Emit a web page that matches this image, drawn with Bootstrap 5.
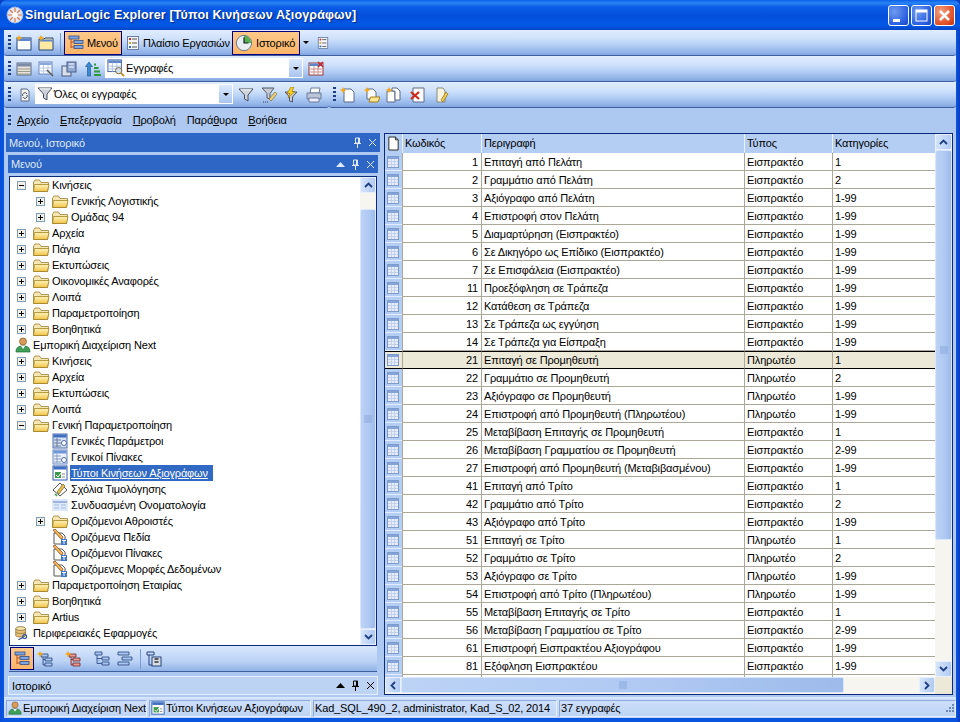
<!DOCTYPE html>
<html lang="el">
<head>
    <meta charset="UTF-8">
    <title>SingularLogic Explorer</title>
    <link href="https://cdn.jsdelivr.net/npm/bootstrap@5.3.0/dist/css/bootstrap.min.css" rel="stylesheet">
    <style>
        html, body { height: 722px; overflow: hidden; }
        body { font-family: "Liberation Sans", Arial, sans-serif; font-size: 11px; letter-spacing: -.15px; color: #000; background: #0a3fc4; line-height: 16px; }
        svg { display: block; flex: none; }
        .xp-window { width: 960px; height: 722px; background: linear-gradient(90deg, #0a4fd8 0, #0a55e0 4px, #0a55e0 956px, #0a3cc0 960px); border-radius: 7px 7px 0 0; overflow: hidden; }
        .xp-title { height: 30px; flex: none; padding: 0 5px 0 6px; background: linear-gradient(180deg, #0a5fe8 0, #2a84f4 3px, #0a5ce6 7px, #0350dc 50%, #0358e6 85%, #0345c4 100%); color: #fff; }
        .xp-title-text { font-size: 12.5px; font-weight: 700; letter-spacing: .15px; margin-left: 1px; text-shadow: 1px 1px 1px #0a2a80; white-space: nowrap; }
        .xp-capbtn { width: 21px; height: 21px; border: 1px solid #fff; border-radius: 3px; background: radial-gradient(circle at 30% 30%, #6f9bf2, #2a5fe0 70%, #1a45c0); margin-left: 2px; }
        .xp-capbtn.close { background: radial-gradient(circle at 30% 30%, #f0a080, #e0532a 65%, #c03010); }
        .xp-client { width: 952px; margin: 0 4px 4px; height: 688px; background: #aec9f1; }
        .xp-band { height: 26px; flex: none; background: linear-gradient(180deg, #e0edfe 0, #cfe1fb 35%, #b4cff5 60%, #8fb1e7 92%, #7fa3de 100%); border-bottom: 1px solid #3f5f9e; border-radius: 0 0 3px 3px; padding: 0 0 0 3px; }
        .xp-grip { width: 3px; height: 16px; flex: none; background: repeating-linear-gradient(180deg, #1e3f80 0 2px, transparent 2px 4px); margin-left: 1px; }
        .xp-sep { width: 1px; height: 20px; flex: none; background: #7d9bd0; }
        .xp-tool { height: 24px; padding: 0 3px; gap: 3px; border: 1px solid transparent; white-space: nowrap; }
        .xp-tool.on { background: linear-gradient(180deg, #fdc98a, #fbb568); border-color: #000080; }
        .xp-combo { height: 20px; background: #fff; padding-left: 1px; gap: 1px; border: 1px solid #fff; margin-bottom: 1px; }
        .xp-combo-text { margin-top: -1px; }
        .xp-combo-drop { width: 13px; height: 18px; margin-left: auto; background: linear-gradient(180deg, #dbe9fd, #a8c4ee); }
        .xp-arrow { width: 0; height: 0; border-left: 3px solid transparent; border-right: 3px solid transparent; border-top: 3px solid #000; }
        .xp-menu { height: 24px; flex: none; padding-left: 3px; }
        .xp-menuitem { margin-right: 11px; }
        .xp-panes { flex: 1 1 auto; min-height: 0; padding: 1px 3px 2px 2px; gap: 4px; }
        .xp-left { width: 374px; flex: none; }
        .xp-cap { height: 19px; flex: none; background: #2e66c5; color: #dfe9fa; padding: 0 3px; }
        .xp-cap-inner { height: 18px; margin: 3px 2px 3px; }
        .xp-cap-light { background: #bdd3f4; color: #000; height: 19px; margin: 4px 2px 0; border: 1px solid #e4eefc; padding: 0 2px 0 3px; }
        .xp-cap-btns { margin-left: auto; gap: 6px; }
        .xp-tree-box { flex: 1 1 auto; min-height: 0; margin: 0 3px; background: #fff; border: 1px solid #0c2a78; }
        .xp-tree { flex: 1 1 auto; overflow: hidden; }
        .xp-node { height: 16px; white-space: nowrap; }
        .xp-exp { width: 9px; height: 9px; flex: none; margin-right: 6px; }
        .xp-lbl { margin-left: 1px; padding: 0 1px; height: 16px; }
        .xp-lbl.sel { background: #316ac5; color: #fff; text-decoration: underline; padding: 0 5px 0 1px; }
        .xp-vbar { width: 16px; flex: none; background: #f7f5f0; }
        .xp-sbtn { width: 16px; height: 16px; flex: none; background: linear-gradient(90deg, #d5e4fb, #b2cbf3); border: 1px solid #e8f0fd; border-radius: 2px; }
        .xp-thumb { background: linear-gradient(90deg, #bcd3f6, #aec8f2 60%, #9dbaea); border: 1px solid #d9e6fb; border-radius: 2px; }
        .xp-vthumb { height: 390px; flex: none; padding-top: 195px; }
        .xp-treetools { height: 26px; flex: none; margin: 0 3px; background: linear-gradient(180deg, #d9e7fc, #bcd3f5 60%, #91b3e8); border-bottom: 1px solid #3f5f9e; padding-left: 1px; }
        .xp-right { flex: 1 1 auto; min-width: 0; border: 1px solid #0c2a78; background: #fff; }
        .xp-main { flex: 1 1 auto; min-height: 0; overflow: hidden; }
        .xp-tablewrap { flex: 1 1 auto; min-width: 0; overflow: hidden; }
        .xp-grid { border-collapse: separate; border-spacing: 0; table-layout: fixed; width: 550px; }
        .xp-grid th { height: 19px; background: #b3cdf3; font-weight: 400; padding: 0 0 0 2px; border-left: 1px solid #e9f1fd; border-bottom: 1px solid #b3cdf3; white-space: nowrap; }
        .xp-grid td { height: 18px; padding: 0 2px; border-bottom: 1px solid #aca899; border-left: 1px solid #aca899; white-space: nowrap; overflow: hidden; }
        .xp-grid td.rec { background: #b3cdf3; border-left: 0; padding: 0 0 0 2px; border-bottom-color: #e3edfb; }
        .xp-grid td.num { text-align: right; padding-right: 3px; }
        .xp-grid tr.cur td { background: #ece9d8; border-top: 1px solid #000; border-bottom: 1px solid #000; }
        .xp-grid tr.tail td { height: 6px; border-bottom: 0; line-height: 0; }
        .xp-hbar { height: 17px; flex: none; background: #f7f5f0; }
        .xp-hthumb { width: 443px; height: 16px; }
        .xp-corner { width: 17px; flex: none; background: #ece9d8; height: 17px; }
        .xp-status { height: 21px; flex: none; background: linear-gradient(180deg, #cfe0fa, #bdd3f5); padding: 2px 0 2px 2px; gap: 2px; border-top: 1px solid #dce9fc; }
        .xp-cell { height: 17px; padding: 0 1px; gap: 1px; border: 1px solid #9fb9e4; border-color: #8fabdb #e6effc #e6effc #8fabdb; white-space: nowrap; overflow: hidden; }
        .ml-3px { margin-left: 3px; } .ml-4px { margin-left: 4px; } .ml-5px { margin-left: 5px; } .ml-6px { margin-left: 6px; }
        .ml-7px { margin-left: 7px; } .ml-8px { margin-left: 8px; } .ml-9px { margin-left: 9px; } .ml-11px { margin-left: 11px; }
        .ml-12px { margin-left: 12px; } .ml-13px { margin-left: 13px; }
    </style>
</head>
<body>
    <svg width="0" height="0" style="position:absolute">
        <defs>
            <linearGradient id="fy" x1="0" y1="0" x2="0" y2="1"><stop offset="0" stop-color="#fff3b8"/><stop offset="1" stop-color="#f0c24a"/></linearGradient>
            <symbol id="folder" viewBox="0 0 18 16"><path d="M1.500 5V14.500H15.500L16.500 7V5.500H9L7.500 3H3z" fill="#f6e7b4" stroke="#9a8030" stroke-width=".8"/><path d="M1.500 14.500L2.500 7.500H17L15.500 14.500z" fill="url(#fy)" stroke="#a08424" stroke-width=".8"/></symbol>
            <symbol id="plus" viewBox="0 0 9 9"><rect x=".5" y=".5" width="8" height="8" fill="#f1efe6" stroke="#7f9db9"/><path d="M2 4.500H7M4.500 2V7" stroke="#000"/></symbol>
            <symbol id="minus" viewBox="0 0 9 9"><rect x=".5" y=".5" width="8" height="8" fill="#f1efe6" stroke="#7f9db9"/><path d="M2 4.500H7" stroke="#000"/></symbol>
            <symbol id="person" viewBox="0 0 16 16"><circle cx="8" cy="4.500" r="3.500" fill="#d99b5a" stroke="#8a5a20" stroke-width=".7"/><path d="M1 15C1 10 4 9 8 9S15 10 15 15z" fill="#3f9e58" stroke="#1f6a30" stroke-width=".7"/><path d="M6 9L8 12L10 9" fill="#fff"/></symbol>
            <symbol id="db" viewBox="0 0 18 18"><path d="M2 4V12C2 14 13 14 13 12V4z" fill="#e5c277" stroke="#7a6430" stroke-width=".8"/><ellipse cx="7.500" cy="4" rx="5.500" ry="2.200" fill="#f5e4ac" stroke="#7a6430" stroke-width=".8"/><path d="M2 8C2 10 13 10 13 8" fill="none" stroke="#7a6430" stroke-width=".7"/><circle cx="12" cy="13" r="2.200" fill="none" stroke="#2a4f9e" stroke-width="1.300"/><path d="M10 14L5 16.500" stroke="#2a4f9e" stroke-width="1.300"/></symbol>
            <symbol id="rec" viewBox="0 0 12 12"><rect x=".5" y=".5" width="11" height="11" fill="#e6edf9" stroke="#7f9bce"/><rect x="1" y="1" width="10" height="2" fill="#84a4d8"/><path d="M1 5.500H11M1 8.500H11M4.500 3V11M7.500 3V11" stroke="#c2d2ec"/></symbol>
            <symbol id="win" viewBox="0 0 16 16"><rect x="1" y="3" width="14" height="12" fill="#fff" stroke="#24427c"/><rect x="1.500" y="3.500" width="13" height="2.500" fill="#5f86c8"/><path d="M3 0L4 2L6.500 3L4 4L3 6.500L2 4L0 3L2 2z" fill="#f4a818"/></symbol>
            <symbol id="win2" viewBox="0 0 16 16"><path d="M1 4H6L7 3H15V15H1z" fill="#fde9a0" stroke="#24427c"/><rect x="1.500" y="4.500" width="13" height="2" fill="#5f86c8"/><path d="M3 0L4 2L6.500 3L4 4L3 6.500L2 4L0 3L2 2z" fill="#f4a818"/></symbol>
            <symbol id="treeic" viewBox="0 0 16 16"><path d="M3 3V13M3 7H6M3 12H6" stroke="#c05020" fill="none"/><rect x="1" y="1" width="10" height="3" fill="#7fa6e4" stroke="#24427c" stroke-width=".7"/><rect x="6" y="5.500" width="9" height="3" fill="#7fa6e4" stroke="#24427c" stroke-width=".7"/><rect x="6" y="10.500" width="9" height="3" fill="#7fa6e4" stroke="#24427c" stroke-width=".7"/></symbol>
            <symbol id="list" viewBox="0 0 14 16"><rect x="1.500" y="1.500" width="11" height="13" fill="#f4f6fb" stroke="#6d7ea6"/><path d="M6 4H11M6 8H11M6 12H11" stroke="#555"/><rect x="3" y="3" width="2" height="2" fill="#d03020"/><rect x="3" y="7" width="2" height="2" fill="#d9a020"/><rect x="3" y="11" width="2" height="2" fill="#3070c0"/></symbol>
            <symbol id="clock" viewBox="0 0 20 20"><circle cx="10" cy="10" r="8.500" fill="#e8eef4" stroke="#5a6f80"/><path d="M10 2A8 8 0 0 1 18 10H10z" fill="#56b04a"/><path d="M10 4V10H15" stroke="#123" stroke-width="1.300" fill="none"/></symbol>
            <symbol id="page" viewBox="0 0 14 16"><path d="M2 1H9L12 4V15H2z" fill="#fff" stroke="#222"/><path d="M9 1V4H12" fill="none" stroke="#222"/></symbol>
            <symbol id="sheet" viewBox="0 0 16 16"><rect x="1" y="2" width="14" height="12" fill="#e8e4d8" stroke="#5a6a8a"/><rect x="1.500" y="2.500" width="13" height="3" fill="#7c8aa8"/><path d="M1 8H15M1 10.500H15M1 13H15" stroke="#9a9a90"/></symbol>
            <symbol id="tbl" viewBox="0 0 16 16"><rect x="1" y="1" width="13" height="12" fill="#fff" stroke="#6a86b8"/><rect x="1.500" y="1.500" width="12" height="2.500" fill="#8aa8d8"/><path d="M1 7H14M1 10H14M5.500 4V13M10 4V13" stroke="#b9cbe6"/><path d="M9 9L15 15" stroke="#5a5a50" stroke-width="1.500"/></symbol>
            <symbol id="tbl2" viewBox="0 0 16 16"><rect x="1" y="2" width="14" height="12" fill="#fff" stroke="#9a3a3a"/><rect x="1.500" y="2.500" width="13" height="2.500" fill="#5f86c8"/><path d="M1 8H15M1 11H15M6 5V14M10 5V14" stroke="#d08a8a"/><path d="M10 1L15 6M15 1L10 6" stroke="#d02020" stroke-width="1.300"/></symbol>
            <symbol id="copy" viewBox="0 0 16 16"><rect x="1" y="5" width="9" height="10" fill="#d8e0ec" stroke="#4a5a80"/><rect x="6" y="1" width="9" height="10" fill="#8fa8d4" stroke="#4a5a80"/><path d="M8 3H13M8 6H13" stroke="#fff"/></symbol>
            <symbol id="updown" viewBox="0 0 16 16"><path d="M4 1L7.500 5.500H5.500V15H2.500V5.500H.5z" fill="#3a8ad0" stroke="#1a4f90" stroke-width=".6"/><path d="M9 14H16M9 10.500H15M9 7H13.500M9 3.500H11" stroke="#2a9a3a" stroke-width="2.200"/></symbol>
            <symbol id="bigrec" viewBox="0 0 20 20"><rect x="1" y="1" width="15" height="13" fill="#fff" stroke="#3a5a9a"/><rect x="1.500" y="1.500" width="14" height="3" fill="#5f86c8"/><path d="M1 8H16M1 11H16M6 4V14M11 4V14" stroke="#a9bfe3"/><circle cx="13" cy="13" r="3.500" fill="#cfe2f4" stroke="#7a5a20"/><path d="M15.500 15.500L19 19" stroke="#c08a20" stroke-width="2"/></symbol>
            <symbol id="refresh" viewBox="0 0 10 14"><path d="M1 1H7L9 3V13H1z" fill="#f4f4f0" stroke="#5a6a8a"/><path d="M2.800 8A2.300 2.300 0 0 1 7 6M7 7A2.300 2.300 0 0 1 2.800 9" fill="none" stroke="#44506a"/></symbol>
            <symbol id="funnel" viewBox="0 0 16 16"><path d="M1 2H15L10 8V14L6.500 12V8z" fill="#cfd3dc" stroke="#444c5c"/><path d="M2.500 2.800H13.500" stroke="#fff"/></symbol>
            <symbol id="funnelp" viewBox="0 0 16 16"><path d="M1 1H13L9 6.500V12L6 11V6.500z" fill="#c9ccd4" stroke="#505868"/><path d="M8 12L14 5L16 7L10 14z" fill="#e8d080" stroke="#8a7020" stroke-width=".7"/><path d="M2 15H8" stroke="#444" stroke-dasharray="1 1"/></symbol>
            <symbol id="funnelz" viewBox="0 0 16 16"><path d="M2 5H14L9.500 10V15L6.500 14V10z" fill="#c9ccd4" stroke="#505868"/><path d="M8 0L4 6.500H7L5 11L12 4.500H9L11 0z" fill="#f8d020" stroke="#a07810" stroke-width=".7"/></symbol>
            <symbol id="printer" viewBox="0 0 16 16"><path d="M5 1H14L13 6H4z" fill="#fff" stroke="#6a7a9a"/><path d="M1 6H15V12H1z" fill="#bcc6d8" stroke="#6a7a9a"/><path d="M3 11H13V15H3z" fill="#eef" stroke="#6a7a9a"/></symbol>
            <symbol id="docnew" viewBox="0 0 16 16"><path d="M4 2H11L14 5V15H4z" fill="#fff" stroke="#5a6a8a"/><path d="M3 0L4 2L6.500 3L4 4L3 6.500L2 4L0 3L2 2z" fill="#f4a818"/></symbol>
            <symbol id="docopen" viewBox="0 0 16 16"><path d="M3 2H9L12 5V12H3z" fill="#fff" stroke="#5a6a8a"/><path d="M3 0L4 2L6.500 3L4 4L3 6.500L2 4L0 3L2 2z" fill="#f4a818"/><path d="M5 15L6.500 10H16L14 15z" fill="#fde794" stroke="#a67f14"/></symbol>
            <symbol id="doccopy" viewBox="0 0 16 16"><path d="M1 4H9V15H1z" fill="#fff" stroke="#5a6a8a"/><path d="M6 1H11L14 4V13H9V4H6z" fill="#fff" stroke="#5a6a8a"/><path d="M3 0L4 2L6.500 3L4 4L3 6.500L2 4L0 3L2 2z" fill="#f4a818"/></symbol>
            <symbol id="docx" viewBox="0 0 16 16"><path d="M4 1H15V15H4z" fill="#fff" stroke="#5a6a8a"/><path d="M2 5L10 12M10 5L2 12" stroke="#d02818" stroke-width="2.200"/></symbol>
            <symbol id="docpen" viewBox="0 0 13 16"><path d="M1 1H7L9 4V15H1z" fill="#f8f4e0" stroke="#8a8a7a"/><path d="M5 13L10 5L12 7L7 15z" fill="#f0c850" stroke="#8a7020" stroke-width=".7"/></symbol>
            <symbol id="gp1" viewBox="0 0 16 16"><rect x="1" y="1" width="14" height="14" fill="#d8e2f4" stroke="#4a6aa8"/><rect x="1.500" y="1.500" width="13" height="3" fill="#3f6fc0"/><path d="M2 7H9M2 10H9M2 13H9M5 5V14" stroke="#6a7a9a"/><circle cx="12" cy="10" r="2.500" fill="#fff" stroke="#4a6aa8"/></symbol>
            <symbol id="gp2" viewBox="0 0 16 16"><rect x="1" y="1" width="14" height="14" fill="#eaf0fb" stroke="#6a8ac0"/><rect x="1.500" y="1.500" width="13" height="3" fill="#6f96d8"/><path d="M2 7H9M2 10H9M2 13H9M5 5V14" stroke="#8aa0c8"/><circle cx="12" cy="11" r="2.500" fill="#fff" stroke="#4a6aa8"/></symbol>
            <symbol id="typ" viewBox="0 0 16 16"><rect x="1" y="1" width="14" height="14" fill="#fff" stroke="#2a5ab0"/><rect x="1.500" y="1.500" width="13" height="3" fill="#3f6fc0"/><rect x="3" y="7" width="6" height="6" fill="#3a9a48"/><path d="M4 10L6 12L10 7" stroke="#fff" fill="none"/><path d="M10 9H13M10 12H13" stroke="#888"/></symbol>
            <symbol id="note" viewBox="0 0 16 16"><path d="M1 9L8 2L15 9L8 15z" fill="#fff" stroke="#555"/><path d="M5 11L11 3L13 5L7 13z" fill="#e8c050" stroke="#7a6020" stroke-width=".7"/><path d="M3 13L5 15" stroke="#3a9a48" stroke-width="1.500"/></symbol>
            <symbol id="names" viewBox="0 0 16 16"><rect x="0" y="2" width="16" height="12" fill="#dde8f8"/><path d="M1 5H15" stroke="#9ab4dc" stroke-width="2"/><path d="M2 8H7M9 8H14M2 11H7M9 11H14" stroke="#a6bcdf"/></symbol>
            <symbol id="defd" viewBox="0 0 16 16"><path d="M2 4H10L13 7V15H2z" fill="#fff" stroke="#555"/><path d="M1 1L3 0L11 8L10 10L8 9z" fill="#e8c050" stroke="#a03020" stroke-width=".7"/><rect x="9" y="10" width="6" height="6" fill="#3f78c8"/><path d="M10 11.500H14M12 11.500V15" stroke="#fff"/></symbol>
            <symbol id="pin" viewBox="0 0 9 11"><path d="M2.500 1H6.500V6H2.500zM1 6.500H8M4.500 7V11M5.500 1V6" stroke="currentColor" fill="none"/></symbol>
            <symbol id="xx" viewBox="0 0 9 9"><path d="M1 1L8 8M8 1L1 8" stroke="currentColor"/></symbol>
            <symbol id="up" viewBox="0 0 9 5"><path d="M4.500 0L9 5H0z" fill="currentColor"/></symbol>
            <symbol id="chevu" viewBox="0 0 9 6"><path d="M1 5L4.500 1.500L8 5" fill="none" stroke="#1e3f80" stroke-width="1.800"/></symbol>
            <symbol id="chevd" viewBox="0 0 9 6"><path d="M1 1L4.500 4.500L8 1" fill="none" stroke="#1e3f80" stroke-width="1.800"/></symbol>
            <symbol id="chevl" viewBox="0 0 6 9"><path d="M5 1L1.500 4.500L5 8" fill="none" stroke="#1e3f80" stroke-width="1.800"/></symbol>
            <symbol id="chevr" viewBox="0 0 6 9"><path d="M1 1L4.500 4.500L1 8" fill="none" stroke="#1e3f80" stroke-width="1.800"/></symbol>
            <symbol id="tt2" viewBox="0 0 16 16"><path d="M4 3H11V6H4zM8 7H15V10H8zM8 12H15V15H8zM6 6V14H8M6 8.500H8" fill="#a9c6f0" stroke="#24427c" stroke-width=".8"/><path d="M3 0L4 2L6.500 3L4 4L3 6.500L2 4L0 3L2 2z" fill="#f4a818"/></symbol>
            <symbol id="tt3" viewBox="0 0 16 16"><path d="M4 3H11V6H4zM8 7H15V10H8zM8 12H15V15H8zM6 6V14H8M6 8.500H8" fill="#e89a90" stroke="#702a2a" stroke-width=".8"/><path d="M3 0L4 2L6.500 3L4 4L3 6.500L2 4L0 3L2 2z" fill="#f4a818"/></symbol>
            <symbol id="tt4" viewBox="0 0 16 16"><path d="M1 1H8V4H1zM8 6H15V9H8zM8 11H15V14H8zM3 4V12.500H8M3 7.500H8" fill="#a9c6f0" stroke="#24427c" stroke-width=".8"/></symbol>
            <symbol id="tt5" viewBox="0 0 16 16"><path d="M1 1H12V4H1zM5 6H15V9H5zM1 11H12V14H1z" fill="#a9c6f0" stroke="#24427c" stroke-width=".8"/></symbol>
            <symbol id="tt6" viewBox="0 0 16 16"><path d="M1 1H8V4H1zM3 4V14H6" fill="none" stroke="#24427c"/><rect x="6" y="6" width="9" height="9" fill="#d8dce4" stroke="#24427c"/><path d="M8.500 8H12.500M8.500 11H12.500" stroke="#333" stroke-width="1.500"/></symbol>
            <symbol id="logo" viewBox="0 0 18 18"><circle cx="9" cy="9" r="8" fill="#dfe6f6" stroke="#9fb6dc"/><path d="M9 2V16M2 9H16M4 4L14 14M14 4L4 14" stroke="#e07a3a" stroke-width="1.200"/><circle cx="9" cy="9" r="3" fill="#fff"/></symbol>
        </defs>
    </svg>

    <div class="xp-window d-flex flex-column">
        <div class="xp-title d-flex align-items-center">
            <svg width="18" height="18"><use href="#logo"/></svg>
            <span class="xp-title-text">SingularLogic Explorer [Τύποι Κινήσεων Αξιογράφων]</span>
            <div class="ms-auto d-flex">
                <div class="xp-capbtn"><svg width="19" height="19" viewBox="0 0 19 19"><rect x="4" y="13" width="7" height="3" fill="#fff"/></svg></div>
                <div class="xp-capbtn"><svg width="19" height="19" viewBox="0 0 19 19"><rect x="4" y="4" width="11" height="11" fill="none" stroke="#fff"/><rect x="4" y="4" width="11" height="2.500" fill="#fff"/></svg></div>
                <div class="xp-capbtn close"><svg width="19" height="19" viewBox="0 0 19 19"><path d="M5 5L14 14M14 5L5 14" stroke="#fff" stroke-width="2.500"/></svg></div>
            </div>
        </div>
        <div class="xp-client d-flex flex-column">
            <div class="xp-band d-flex align-items-center">
                <span class="xp-grip"></span>
                <svg class="ml-5px" width="16" height="16"><use href="#win"/></svg>
                <svg class="ml-6px" width="16" height="16"><use href="#win2"/></svg>
                <span class="xp-sep ml-6px"></span>
                <div class="xp-tool on d-flex align-items-center ml-3px" style="width:58px"><svg width="16" height="16"><use href="#treeic"/></svg><span>Μενού</span></div>
                <div class="xp-tool d-flex align-items-center" style="width:110px"><svg width="14" height="16"><use href="#list"/></svg><span>Πλαίσιο Εργασιών</span></div>
                <div class="xp-tool on d-flex align-items-center" style="width:68px;padding:0 2px"><svg width="18" height="18"><use href="#clock"/></svg><span>Ιστορικό</span></div>
                <span class="xp-arrow ml-3px"></span>
                <svg class="ml-8px" width="12" height="14"><use href="#list"/></svg>
            </div>
            <div class="xp-band d-flex align-items-center">
                <span class="xp-grip"></span>
                <svg class="ml-5px" width="16" height="16"><use href="#sheet"/></svg>
                <svg class="ml-6px" width="16" height="16"><use href="#tbl"/></svg>
                <svg class="ml-7px" width="16" height="16"><use href="#copy"/></svg>
                <svg class="ml-8px" width="16" height="16"><use href="#updown"/></svg>
                <div class="xp-combo d-flex align-items-center ml-4px" style="width:198px"><svg width="18" height="18"><use href="#bigrec"/></svg><span class="xp-combo-text">Εγγραφές</span><span class="xp-combo-drop d-flex align-items-center justify-content-center"><span class="xp-arrow"></span></span></div>
                <svg class="ml-5px" width="16" height="16"><use href="#tbl2"/></svg>
            </div>
            <div class="d-flex flex-none">
                <div class="xp-band d-flex align-items-center" style="width:325px">
                    <span class="xp-grip"></span>
                    <svg class="ml-9px" width="10" height="14"><use href="#refresh"/></svg>
                    <div class="xp-combo d-flex align-items-center ml-5px" style="width:198px"><svg width="16" height="16"><use href="#funnel"/></svg><span class="xp-combo-text">Όλες οι εγγραφές</span><span class="xp-combo-drop d-flex align-items-center justify-content-center"><span class="xp-arrow"></span></span></div>
                    <svg class="ml-5px" width="16" height="16"><use href="#funnel"/></svg>
                    <svg class="ml-7px" width="16" height="16"><use href="#funnelp"/></svg>
                    <svg class="ml-6px" width="16" height="16"><use href="#funnelz"/></svg>
                    <svg class="ml-7px" width="16" height="16"><use href="#printer"/></svg>
                </div>
                <div class="xp-band d-flex align-items-center flex-grow-1">
                    <span class="xp-grip"></span>
                    <svg class="ml-4px" width="16" height="16"><use href="#docnew"/></svg>
                    <svg class="ml-8px" width="16" height="16"><use href="#docopen"/></svg>
                    <svg class="ml-6px" width="16" height="16"><use href="#doccopy"/></svg>
                    <svg class="ml-7px" width="16" height="16"><use href="#docx"/></svg>
                    <svg class="ml-11px" width="13" height="16"><use href="#docpen"/></svg>
                </div>
            </div>
            <div class="xp-menu d-flex align-items-center">
                <span class="xp-grip" style="height:10px"></span>
                <span class="xp-menuitem ml-6px"><u>Α</u>ρχείο</span>
                <span class="xp-menuitem"><u>Ε</u>πεξεργασία</span>
                <span class="xp-menuitem"><u>Π</u>ροβολή</span>
                <span class="xp-menuitem">Παρά<u>θ</u>υρα</span>
                <span class="xp-menuitem"><u>Β</u>οήθεια</span>
            </div>
            <div class="xp-panes d-flex">
                <div class="xp-left d-flex flex-column">
                    <div class="xp-cap d-flex align-items-center"><span>Μενού, Ιστορικό</span><span class="xp-cap-btns d-flex align-items-center"><svg width="9" height="11"><use href="#pin"/></svg><svg width="9" height="9"><use href="#xx"/></svg></span></div>
                    <div class="xp-cap xp-cap-inner d-flex align-items-center"><span>Μενού</span><span class="xp-cap-btns d-flex align-items-center"><svg width="9" height="5"><use href="#up"/></svg><svg width="9" height="11"><use href="#pin"/></svg><svg width="9" height="9"><use href="#xx"/></svg></span></div>
                    <div class="xp-tree-box d-flex">
                        <div class="xp-tree" id="tree"></div>
                        <div class="xp-vbar d-flex flex-column">
                            <div class="xp-sbtn d-flex align-items-center justify-content-center"><svg width="9" height="6"><use href="#chevu"/></svg></div>
                            <div style="height:16px"></div>
                            <div class="xp-thumb flex-grow-1 d-flex align-items-center justify-content-center"><svg width="8" height="8" viewBox="0 0 8 8"><path d="M0 1H8M0 3H8M0 5H8M0 7H8" stroke="#8aa8dc"/></svg></div>
                            <div class="xp-sbtn d-flex align-items-center justify-content-center"><svg width="9" height="6"><use href="#chevd"/></svg></div>
                        </div>
                    </div>
                    <div class="xp-treetools d-flex align-items-center">
                        <div class="xp-tool on d-flex align-items-center" style="height:23px;padding:0 3px"><svg width="16" height="16"><use href="#treeic"/></svg></div>
                        <svg class="ml-3px" width="16" height="16"><use href="#tt2"/></svg>
                        <svg class="ml-12px" width="16" height="16"><use href="#tt3"/></svg>
                        <svg class="ml-13px" width="16" height="16"><use href="#tt4"/></svg>
                        <svg class="ml-7px" width="16" height="16"><use href="#tt5"/></svg>
                        <span class="xp-sep ml-7px"></span>
                        <svg class="ml-5px" width="16" height="16"><use href="#tt6"/></svg>
                    </div>
                    <div class="xp-cap xp-cap-light d-flex align-items-center"><span>Ιστορικό</span><span class="xp-cap-btns d-flex align-items-center"><svg width="9" height="5"><use href="#up"/></svg><svg width="9" height="11"><use href="#pin"/></svg><svg width="9" height="9"><use href="#xx"/></svg></span></div>
                </div>
                <div class="xp-right d-flex flex-column">
                    <div class="xp-main d-flex">
                        <div class="xp-tablewrap">
                            <table class="xp-grid">
                                <colgroup><col style="width:17px"><col style="width:79px"><col style="width:263px"><col style="width:88px"><col style="width:103px"></colgroup>
                                <thead><tr><th style="border-left:0"><svg width="13" height="15"><use href="#page"/></svg></th><th>Κωδικός</th><th>Περιγραφή</th><th>Τύπος</th><th>Κατηγορίες</th></tr></thead>
                                <tbody id="rows"></tbody>
                            </table>
                        </div>
                        <div class="xp-vbar d-flex flex-column" style="width:17px">
                            <div class="xp-sbtn d-flex align-items-center justify-content-center" style="width:17px"><svg width="9" height="6"><use href="#chevu"/></svg></div>
                            <div class="xp-thumb xp-vthumb d-flex justify-content-center"><svg width="8" height="8" viewBox="0 0 8 8"><path d="M0 1H8M0 3H8M0 5H8M0 7H8" stroke="#8aa8dc"/></svg></div>
                            <div class="flex-grow-1"></div>
                            <div class="xp-sbtn d-flex align-items-center justify-content-center" style="width:17px"><svg width="9" height="6"><use href="#chevd"/></svg></div>
                        </div>
                    </div>
                    <div class="xp-hbar d-flex">
                        <div class="xp-sbtn d-flex align-items-center justify-content-center"><svg width="6" height="9"><use href="#chevl"/></svg></div>
                        <div class="xp-thumb xp-hthumb d-flex align-items-center justify-content-center"><svg width="8" height="8" viewBox="0 0 8 8"><path d="M1 0V8M3 0V8M5 0V8M7 0V8" stroke="#8aa8dc"/></svg></div>
                        <div class="xp-sbtn ms-auto d-flex align-items-center justify-content-center"><svg width="6" height="9"><use href="#chevr"/></svg></div>
                        <div class="xp-corner"></div>
                    </div>
                </div>
            </div>
            <div class="xp-status d-flex align-items-center">
                <div class="xp-cell d-flex align-items-center" style="width:141px"><svg width="14" height="14"><use href="#person"/></svg><span>Εμπορική Διαχείριση Next</span></div>
                <div class="xp-cell d-flex align-items-center" style="width:162px"><svg width="14" height="14"><use href="#typ"/></svg><span>Τύποι Κινήσεων Αξιογράφων</span></div>
                <div class="xp-cell d-flex align-items-center" style="width:244px"><span>Kad_SQL_490_2, administrator, Kad_S_02, 2014</span></div>
                <div class="xp-cell d-flex align-items-center flex-grow-1"><span>37 εγγραφές</span><svg class="ms-auto" width="10" height="10" viewBox="0 0 10 10"><path d="M8 1h2v2H8zM5 4h2v2H5zM8 4h2v2H8zM2 7h2v2H2zM5 7h2v2H5zM8 7h2v2H8z" fill="#6a88b8"/></svg></div>
            </div>
        </div>
    </div>

    <script>
        // level, expander (+ / - / none), icon, text
        const nodes = [
            [0, "-", "folder", "Κινήσεις"],
            [1, "+", "folder", "Γενικής Λογιστικής"],
            [1, "+", "folder", "Ομάδας 94"],
            [0, "+", "folder", "Αρχεία"],
            [0, "+", "folder", "Πάγια"],
            [0, "+", "folder", "Εκτυπώσεις"],
            [0, "+", "folder", "Οικονομικές Αναφορές"],
            [0, "+", "folder", "Λοιπά"],
            [0, "+", "folder", "Παραμετροποίηση"],
            [0, "+", "folder", "Βοηθητικά"],
            [-1, "", "person", "Εμπορική Διαχείριση Next"],
            [0, "+", "folder", "Κινήσεις"],
            [0, "+", "folder", "Αρχεία"],
            [0, "+", "folder", "Εκτυπώσεις"],
            [0, "+", "folder", "Λοιπά"],
            [0, "-", "folder", "Γενική Παραμετροποίηση"],
            [1, "", "gp1", "Γενικές Παράμετροι"],
            [1, "", "gp2", "Γενικοί Πίνακες"],
            [1, "", "typ", "Τύποι Κινήσεων Αξιογράφων", true],
            [1, "", "note", "Σχόλια Τιμολόγησης"],
            [1, "", "names", "Συνδυασμένη Ονοματολογία"],
            [1, "+", "folder", "Οριζόμενοι Αθροιστές"],
            [1, "", "defd", "Οριζόμενα Πεδία"],
            [1, "", "defd", "Οριζόμενοι Πίνακες"],
            [1, "", "defd", "Οριζόμενες Μορφές Δεδομένων"],
            [0, "+", "folder", "Παραμετροποίηση Εταιρίας"],
            [0, "+", "folder", "Βοηθητικά"],
            [0, "+", "folder", "Artius"],
            [-1, "", "db", "Περιφερειακές Εφαρμογές"]
        ];
        const rows = [
            [1, "Επιταγή από Πελάτη", "Εισπρακτέο", "1"],
            [2, "Γραμμάτιο από Πελάτη", "Εισπρακτέο", "2"],
            [3, "Αξιόγραφο από Πελάτη", "Εισπρακτέο", "1-99"],
            [4, "Επιστροφή στον Πελάτη", "Εισπρακτέο", "1-99"],
            [5, "Διαμαρτύρηση (Εισπρακτέο)", "Εισπρακτέο", "1-99"],
            [6, "Σε Δικηγόρο ως Επίδικο (Εισπρακτέο)", "Εισπρακτέο", "1-99"],
            [7, "Σε Επισφάλεια (Εισπρακτέο)", "Εισπρακτέο", "1-99"],
            [11, "Προεξόφληση σε Τράπεζα", "Εισπρακτέο", "1-99"],
            [12, "Κατάθεση σε Τράπεζα", "Εισπρακτέο", "1-99"],
            [13, "Σε Τράπεζα ως εγγύηση", "Εισπρακτέο", "1-99"],
            [14, "Σε Τράπεζα για Είσπραξη", "Εισπρακτέο", "1-99"],
            [21, "Επιταγή σε Προμηθευτή", "Πληρωτέο", "1"],
            [22, "Γραμμάτιο σε Προμηθευτή", "Πληρωτέο", "2"],
            [23, "Αξιόγραφο σε Προμηθευτή", "Πληρωτέο", "1-99"],
            [24, "Επιστροφή από Προμηθευτή (Πληρωτέου)", "Πληρωτέο", "1-99"],
            [25, "Μεταβίβαση Επιταγής σε Προμηθευτή", "Εισπρακτέο", "1"],
            [26, "Μεταβίβαση Γραμματίου σε Προμηθευτή", "Εισπρακτέο", "2-99"],
            [27, "Επιστροφή από Προμηθευτή (Μεταβιβασμένου)", "Εισπρακτέο", "1-99"],
            [41, "Επιταγή από Τρίτο", "Εισπρακτέο", "1"],
            [42, "Γραμμάτιο από Τρίτο", "Εισπρακτέο", "2"],
            [43, "Αξιόγραφο από Τρίτο", "Εισπρακτέο", "1-99"],
            [51, "Επιταγή σε Τρίτο", "Πληρωτέο", "1"],
            [52, "Γραμμάτιο σε Τρίτο", "Πληρωτέο", "2"],
            [53, "Αξιόγραφο σε Τρίτο", "Πληρωτέο", "1-99"],
            [54, "Επιστροφή από Τρίτο (Πληρωτέου)", "Πληρωτέο", "1-99"],
            [55, "Μεταβίβαση Επιταγής σε Τρίτο", "Εισπρακτέο", "1"],
            [56, "Μεταβίβαση Γραμματίου σε Τρίτο", "Εισπρακτέο", "2-99"],
            [61, "Επιστροφή Εισπρακτέου Αξιογράφου", "Εισπρακτέο", "1-99"],
            [81, "Εξόφληση Εισπρακτέου", "Εισπρακτέο", "1-99"]
        ];

        document.getElementById("tree").innerHTML = nodes.map(([level, exp, icon, text, sel]) => {
            if (level < 0) {
                return `<div class="xp-node d-flex align-items-center" style="padding-left:${icon === "db" ? 3 : 5}px"><svg width="${icon === "db" ? 18 : 16}" height="16"><use href="#${icon}"/></svg><span class="xp-lbl">${text}</span></div>`;
            }
            const left = level === 0 ? 7 : 26;
            const box = exp ? `<svg class="xp-exp"><use href="#${exp === "+" ? "plus" : "minus"}"/></svg>` : `<span class="xp-exp"></span>`;
            return `<div class="xp-node d-flex align-items-center" style="padding-left:${left}px">${box}<svg width="18" height="16"><use href="#${icon}"/></svg><span class="xp-lbl${sel ? " sel" : ""}">${text}</span></div>`;
        }).join("");

        let html = rows.map(([code, descr, type, cat]) =>
            `<tr class="${code === 21 ? "cur" : ""}"><td class="rec"><svg width="12" height="12"><use href="#rec"/></svg></td><td class="num">${code}</td><td>${descr}</td><td>${type}</td><td>${cat}</td></tr>`
        ).join("");
        html += `<tr class="tail"><td class="rec"></td><td></td><td></td><td></td><td></td></tr>`;
        document.getElementById("rows").innerHTML = html;
    </script>
    <script src="https://cdn.jsdelivr.net/npm/bootstrap@5.3.0/dist/js/bootstrap.bundle.min.js"></script>
</body>
</html>
